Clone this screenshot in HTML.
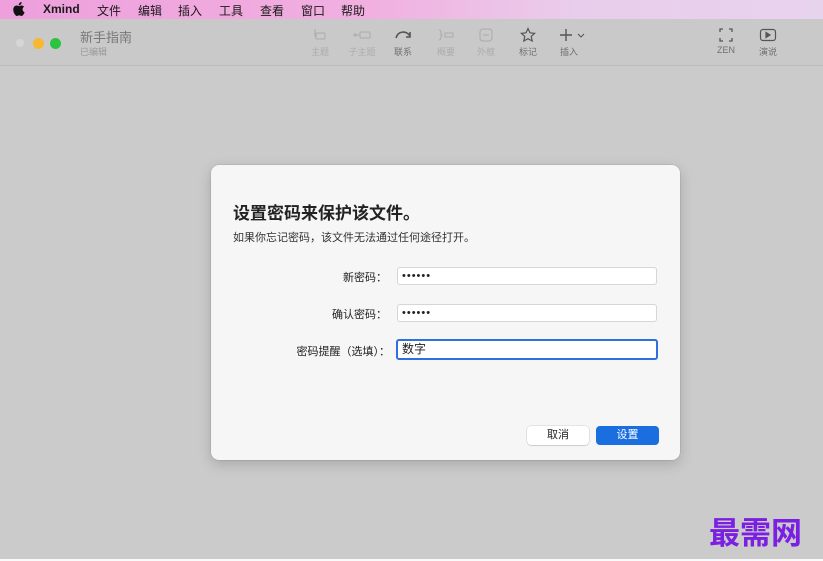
<!DOCTYPE html>
<html><head><meta charset="utf-8"><style>
*{margin:0;padding:0;box-sizing:border-box}
body{width:823px;height:561px;overflow:hidden;background:#fff;font-family:"Liberation Sans","Noto Sans CJK SC",sans-serif;position:relative}
.menubar{position:absolute;left:0;top:0;width:823px;height:19px;background:linear-gradient(90deg,#ee9fdc 0%,#f1b0e0 45%,#e9cdec 70%,#e8d3ed 100%);font-size:12px;color:#1a1a1a}
.menubar span{position:absolute;top:2px}
.win{position:absolute;left:0;top:19px;width:823px;height:540px;background:#cbcbcb;border-top-left-radius:4px}
.tb{position:absolute;left:0;top:0;width:823px;height:47px;background:#c9c9c9;border-bottom:1px solid #bdbdbd}
.dot{position:absolute;top:19px;width:11px;height:11px;border-radius:50%}
.tool{position:absolute;top:8px;text-align:center;font-size:9px;color:#707070;width:40px}
.tool.dis{color:#acacac}
.tool svg{display:block;margin:0 auto 2px;height:16px}
.dlg{position:absolute;left:211px;top:165px;width:469px;height:295px;background:#f6f6f6;border-radius:8px;box-shadow:0 4px 14px rgba(0,0,0,.18),0 0 0 .5px rgba(0,0,0,.12)}
.h1{position:absolute;left:22px;top:34px;font-size:17px;font-weight:bold;color:#222}
.sub{position:absolute;left:22px;top:64px;font-size:11px;color:#333}
.lbl{position:absolute;font-size:11px;color:#222;text-align:right;right:293px}
.inp{position:absolute;left:186px;width:260px;height:18px;background:#fff;border:1px solid #d6d6d6;border-radius:3px;font-size:11px;padding-left:4px;line-height:16px;color:#222}
.btn{position:absolute;top:261px;height:19px;border-radius:4px;font-size:11px;text-align:center;line-height:19px}
</style></head><body>
<div class="menubar">
<svg style="position:absolute;left:13px;top:2px" width="12" height="14" viewBox="0 0 12 14"><path d="M9.6 7.4c0-1.7 1.4-2.5 1.5-2.6-.8-1.2-2.1-1.3-2.5-1.3-1.1-.1-2.1.6-2.6.6-.6 0-1.4-.6-2.3-.6C2.500 3.500 1.400 4.200.800 5.300c-1.200 2.100-.3 5.300.9 7 .6.8 1.300 1.800 2.200 1.700.9 0 1.200-.6 2.300-.6s1.400.6 2.300.6c1 0 1.600-.9 2.100-1.700.7-1 1-1.900 1-2-.1 0-1.900-.7-2-2.900zM7.900 2.300c.5-.6.800-1.400.7-2.300-.7 0-1.600.5-2.100 1.100-.5.500-.9 1.400-.8 2.200.8.100 1.600-.4 2.200-1z" fill="#111"/></svg>
<span style="left:43px;font-weight:bold">Xmind</span>
<span style="left:97px">文件</span><span style="left:138px">编辑</span><span style="left:178px">插入</span><span style="left:219px">工具</span><span style="left:260px">查看</span><span style="left:301px">窗口</span><span style="left:341px">帮助</span>
</div>
<div class="win">
<div class="tb">
<div class="dot" style="left:16px;width:8px;height:8px;top:20px;background:#d6d6d6"></div>
<div class="dot" style="left:33px;background:#f7b92f"></div>
<div class="dot" style="left:50px;background:#2ac43e"></div>
<div style="position:absolute;left:80px;top:8px;font-size:13px;color:#777">新手指南</div>
<div style="position:absolute;left:80px;top:26px;font-size:9px;color:#999">已编辑</div>
<div class="tool dis" style="left:300px"><svg width="16" viewBox="0 0 16 16" fill="none" stroke="#aaa"><rect x="4" y="6" width="9" height="6" rx="1"/><path d="M3 2v7h1"/></svg>主题</div>
<div class="tool dis" style="left:342px"><svg width="20" viewBox="0 0 20 16" fill="none" stroke="#aaa"><circle cx="3" cy="8" r="1"/><path d="M4 8h4"/><rect x="8" y="5" width="10" height="6" rx="1"/></svg>子主题</div>
<div class="tool" style="left:383px"><svg width="18" viewBox="0 0 18 16" fill="none" stroke="#555" stroke-width="1.6"><path d="M2 11C4 4 12 3 16 9"/><path d="M16 5v5h-4"/></svg>联系</div>
<div class="tool dis" style="left:426px"><svg width="18" viewBox="0 0 18 16" fill="none" stroke="#aaa"><path d="M2 3c2 0 2 2 2 5s0 5-2 5M4 8h2"/><rect x="8" y="6" width="8" height="4"/></svg>概要</div>
<div class="tool dis" style="left:466px"><svg width="16" viewBox="0 0 16 16" fill="none" stroke="#aaa"><rect x="2" y="2" width="12" height="12" rx="3"/><path d="M5 8h6"/></svg>外框</div>
<div class="tool" style="left:508px"><svg width="16" viewBox="0 0 16 16" fill="none" stroke="#555" stroke-width="1.2"><path d="M8 1.5l2 4.3 4.6.5-3.4 3.1 1 4.6L8 11.7 3.8 14l1-4.6L1.4 6.3 6 5.8z"/></svg>标记</div>
<div class="tool" style="left:553px"><svg width="30" viewBox="0 0 30 16" fill="none" stroke="#555" stroke-width="1.4"><path d="M8 2v12M2 8h12"/><path d="M20 7l3 3 3-3" stroke-width="1.1"/></svg><span style="margin-left:-8px">插入</span></div>
<div class="tool" style="left:706px"><svg width="16" viewBox="0 0 16 16" fill="none" stroke="#555" stroke-width="1.3"><path d="M2 5V2h3M11 2h3v3M14 11v3h-3M5 14H2v-3"/></svg>ZEN</div>
<div class="tool" style="left:748px"><svg width="18" viewBox="0 0 18 16" fill="none" stroke="#555" stroke-width="1.2"><rect x="1.5" y="2.5" width="15" height="11" rx="2.5"/><path d="M7 5.5v5l4-2.5z" fill="#555"/></svg>演说</div>
</div>
<div style="position:absolute;left:709px;top:489px;font-family:'Noto Sans CJK SC',sans-serif;font-weight:bold;font-size:31px;color:#7b1fe2;letter-spacing:0px">最需网</div>
</div>
<div style="position:absolute;left:0;top:559px;width:823px;height:2px;background:#fafafa"></div>
<div class="dlg">
<div class="h1">设置密码来保护该文件。</div>
<div class="sub">如果你忘记密码，该文件无法通过任何途径打开。</div>
<div class="lbl" style="top:104px">新密码：</div>
<div class="inp" style="top:102px;letter-spacing:1px">••••••</div>
<div class="lbl" style="top:141px">确认密码：</div>
<div class="inp" style="top:139px;letter-spacing:1px">••••••</div>
<div class="lbl" style="top:178px;right:290px">密码提醒（选填）：</div>
<div class="inp" style="top:174px;left:185px;width:262px;height:21px;border:2px solid #2f6fde;line-height:17px;font-size:12px">数字</div>
<div class="btn" style="left:316px;width:62px;background:#fff;box-shadow:0 0 0 .5px rgba(0,0,0,.15),0 1px 1px rgba(0,0,0,.1);color:#222">取消</div>
<div class="btn" style="left:385px;width:63px;background:#1a6ee0;color:#fff">设置</div>
</div>
</body></html>
